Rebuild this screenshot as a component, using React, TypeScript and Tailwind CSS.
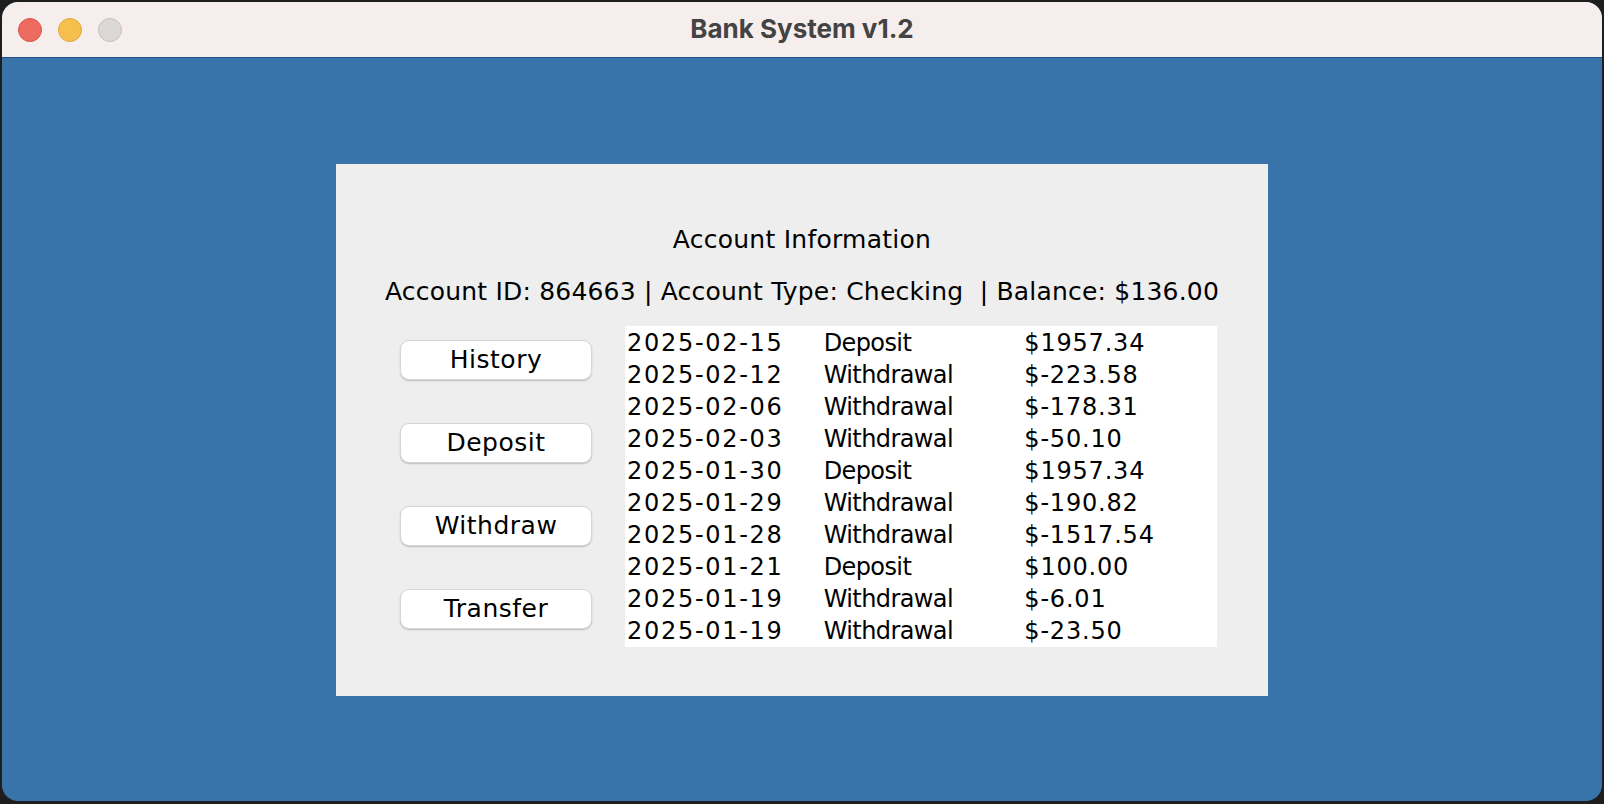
import { useState } from "react";

interface Transaction {
  date: string;
  type: string;
  amount: string;
}

const transactions: Transaction[] = [
  { date: "2025-02-15", type: "Deposit", amount: "$1957.34" },
  { date: "2025-02-12", type: "Withdrawal", amount: "$-223.58" },
  { date: "2025-02-06", type: "Withdrawal", amount: "$-178.31" },
  { date: "2025-02-03", type: "Withdrawal", amount: "$-50.10" },
  { date: "2025-01-30", type: "Deposit", amount: "$1957.34" },
  { date: "2025-01-29", type: "Withdrawal", amount: "$-190.82" },
  { date: "2025-01-28", type: "Withdrawal", amount: "$-1517.54" },
  { date: "2025-01-21", type: "Deposit", amount: "$100.00" },
  { date: "2025-01-19", type: "Withdrawal", amount: "$-6.01" },
  { date: "2025-01-19", type: "Withdrawal", amount: "$-23.50" },
];

const actions = ["History", "Deposit", "Withdraw", "Transfer"];

function TrafficLights() {
  return (
    <div className="absolute left-[16px] top-[16px] flex gap-[16px]">
      <span className="w-[24px] h-[24px] rounded-full bg-[#ee6b60] border border-[#d9554b]" />
      <span className="w-[24px] h-[24px] rounded-full bg-[#f6c04f] border border-[#dea63b]" />
      <span className="w-[24px] h-[24px] rounded-full bg-[#dcd8d5] border border-[#c4bfbb]" />
    </div>
  );
}

export default function App() {
  const [active, setActive] = useState("History");

  return (
    <div className="w-[1604px] h-[804px] bg-[#1e1e1e] pt-[2px] px-[2px] pb-[3px]">
      <div className="h-full rounded-[16px] overflow-hidden flex flex-col bg-[#3873a9]">
        {/* Title bar */}
        <div className="relative h-[56px] shrink-0 bg-[#f6eeed] border-b border-[#1d5088] flex items-center justify-center">
          <TrafficLights />
          <span className="text-[26px] leading-[30px] -mt-[2px] font-bold text-[#434343] font-['Inter',sans-serif]">
            Bank System v1.2
          </span>
        </div>

        {/* Body */}
        <div className="flex-1 flex justify-center pt-[106px]">
          <div className="w-[932px] h-[532px] bg-[#eeeeee] flex flex-col items-center pt-[61px] text-black font-['DejaVu_Sans',sans-serif] text-[24px]">
            <div className="leading-[30px] text-[25px] tracking-[0.25px]">Account Information</div>
            <div className="leading-[30px] text-[25px] tracking-[0.2px] mt-[22px] whitespace-pre">
              {"Account ID: 864663 | Account Type: Checking  | Balance: $136.00"}
            </div>

            <div className="w-full flex mt-[19px] pl-[64px]">
              <div className="flex flex-col gap-[43px] pt-[14px]">
                {actions.map((a) => (
                  <button
                    key={a}
                    onClick={() => setActive(a)}
                    className={`w-[192px] h-[40px] rounded-[9px] bg-white border border-[#d6d6d6] shadow-[0_1px_1.5px_rgba(0,0,0,0.22)] leading-[38px] text-[25px] tracking-[0.5px] text-black ${
                      active === a ? "outline-none" : ""
                    }`}
                  >
                    {a}
                  </button>
                ))}
              </div>

              <div className="ml-[33px] w-[592px] h-[321px] bg-white pt-[1px]">
                {transactions.map((t, i) => (
                  <div key={i} className="grid grid-cols-3 h-[32px] leading-[32px] pl-[2px]">
                    <span className="tracking-[1.7px]">{t.date}</span>
                    <span className="tracking-[-0.6px]">{t.type}</span>
                    <span className="pl-[4px] tracking-[0.8px]">{t.amount}</span>
                  </div>
                ))}
              </div>
            </div>
          </div>
        </div>
      </div>
    </div>
  );
}
